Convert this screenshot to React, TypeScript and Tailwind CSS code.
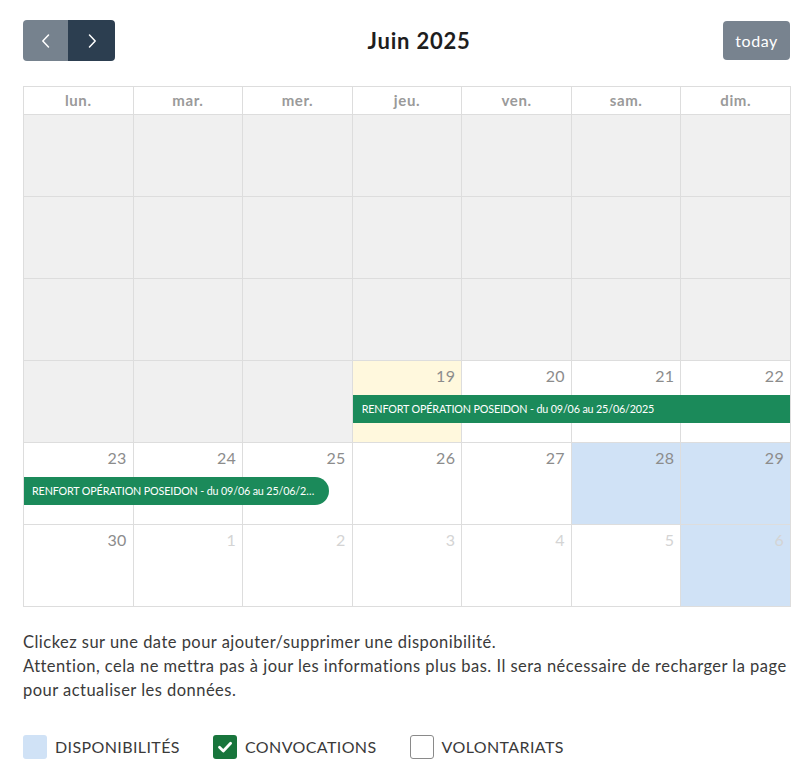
import * as React from "react";

type Day = {
  n: number;
  other?: boolean;
  past?: boolean;
  today?: boolean;
  dispo?: boolean;
};

const weeks: Day[][] = [
  [26, 27, 28, 29, 30, 31, 1].map((n) => ({ n, past: true })),
  [2, 3, 4, 5, 6, 7, 8].map((n) => ({ n, past: true })),
  [9, 10, 11, 12, 13, 14, 15].map((n) => ({ n, past: true })),
  [
    { n: 16, past: true },
    { n: 17, past: true },
    { n: 18, past: true },
    { n: 19, today: true },
    { n: 20 },
    { n: 21 },
    { n: 22 },
  ],
  [
    { n: 23 },
    { n: 24 },
    { n: 25 },
    { n: 26 },
    { n: 27 },
    { n: 28, dispo: true },
    { n: 29, dispo: true },
  ],
  [
    { n: 30 },
    { n: 1, other: true },
    { n: 2, other: true },
    { n: 3, other: true },
    { n: 4, other: true },
    { n: 5, other: true },
    { n: 6, other: true, dispo: true },
  ],
];

const colStart = [
  "col-start-1",
  "col-start-2",
  "col-start-3",
  "col-start-4",
  "col-start-5",
  "col-start-6",
  "col-start-7",
];

const dayNames = ["lun.", "mar.", "mer.", "jeu.", "ven.", "sam.", "dim."];

const font = { fontFamily: "Lato, 'Noto Sans', sans-serif" };

const Chevron = ({ dir }: { dir: "left" | "right" }) => (
  <svg width="14" height="16" viewBox="0 0 14 16" fill="none">
    <path
      d={dir === "left" ? "M9.5 2 L3.8 8 L9.5 14" : "M4.5 2 L10.2 8 L4.5 14"}
      stroke="white"
      strokeWidth="1.5"
      strokeLinecap="round"
      strokeLinejoin="round"
    />
  </svg>
);

function cellBg(d: Day) {
  if (d.dispo) return "bg-[#d0e2f6]";
  if (d.today) return "bg-[#fff8dd]";
  if (d.past) return "bg-[#f0f0f0]";
  return "bg-white";
}

const eventLabel = "RENFORT OPÉRATION POSEIDON - du 09/06 au 25/06/2025";

const Week = ({ days, index }: { days: Day[]; index: number }) => (
  <div className="grid h-[82px] grid-cols-7 grid-rows-[34px_28px_1fr]">
    {days.map((d, i) => (
      <div
        key={i}
        className={`${colStart[i]} row-span-3 row-start-1 border-b border-r border-[#dddddd] ${cellBg(d)} flex justify-end pr-[6px] pt-[5px]`}
      >
        {!d.past && (
          <span
            className={`text-[16px] leading-[20px] tracking-[0.3px] ${d.other ? "text-[#d4d4d4]" : "text-[#8c8c8c]"}`}
          >
            {d.n}
          </span>
        )}
      </div>
    ))}
    {index === 3 && (
      <div className="col-span-4 col-start-4 row-start-2 mr-[1px] flex items-center bg-[#1b8a5a] pl-[9px] text-[10.75px] tracking-[-0.15px] text-white">
        {eventLabel}
      </div>
    )}
    {index === 4 && (
      <div className="col-span-3 col-start-1 row-start-2 mr-[24px] flex min-w-0 items-center rounded-r-[14px] bg-[#1b8a5a] pl-[8px] pr-[13px] text-[10.75px] tracking-[-0.15px] text-white">
        <span className="truncate">{eventLabel}</span>
      </div>
    )}
  </div>
);

export default function App() {
  return (
    <div className="min-h-[784px] bg-white pl-[23px] pt-[20px]" style={font}>
      <div className="w-[768px]">
        <div className="flex h-[41px] items-center justify-between">
          <div className="flex h-[41px] overflow-hidden rounded-[4px]">
            <button className="flex w-[45px] items-center justify-center bg-[#76828e]">
              <Chevron dir="left" />
            </button>
            <button className="flex w-[47px] items-center justify-center bg-[#2c3e50]">
              <Chevron dir="right" />
            </button>
          </div>
          <h2 className="text-[22px] font-bold tracking-[0.8px] text-[#1e1e1e]">Juin 2025</h2>
          <button className="mr-[1px] h-[39px] rounded-[4px] bg-[#78838f] px-[12px] text-[16px] tracking-[0.6px] text-white">
            today
          </button>
        </div>

        <div className="mt-[25px] border-l border-t border-[#dddddd]">
          <div className="grid h-[28px] grid-cols-7">
            {dayNames.map((n) => (
              <div
                key={n}
                className="flex items-center justify-center border-b border-r border-[#dddddd] text-[15px] font-bold tracking-[0.6px] text-[#9a9a9a]"
              >
                {n}
              </div>
            ))}
          </div>
          {weeks.map((w, i) => (
            <Week key={i} days={w} index={i} />
          ))}
        </div>

        <div className="mt-[23px] text-[16.5px] leading-[24px] tracking-[0.47px] text-[#3a3a3a]">
          <p>Clickez sur une date pour ajouter/supprimer une disponibilité.</p>
          <p>
            Attention, cela ne mettra pas à jour les informations plus bas. Il sera nécessaire de
            recharger la page pour actualiser les données.
          </p>
        </div>

        <div className="mt-[33px] flex items-center text-[16px] tracking-[0.4px] text-[#3a3a3a]">
          <div className="flex items-center gap-[8px]">
            <span className="h-[24px] w-[24px] rounded-[3px] bg-[#d0e2f6]" />
            <span>DISPONIBILITÉS</span>
          </div>
          <div className="ml-[33px] flex items-center gap-[8px]">
            <span className="flex h-[24px] w-[24px] items-center justify-center rounded-[3px] bg-[#18753c]">
              <svg width="16" height="16" viewBox="0 0 16 16" fill="none">
                <path
                  d="M2.5 8.3 L6.3 12 L13.6 4.3"
                  stroke="white"
                  strokeWidth="2.8"
                  strokeLinecap="round"
                  strokeLinejoin="round"
                />
              </svg>
            </span>
            <span>CONVOCATIONS</span>
          </div>
          <div className="ml-[33px] flex items-center gap-[8px]">
            <span className="h-[24px] w-[24px] rounded-[3px] border border-[#8a8a8a] bg-white" />
            <span>VOLONTARIATS</span>
          </div>
        </div>
      </div>
    </div>
  );
}
